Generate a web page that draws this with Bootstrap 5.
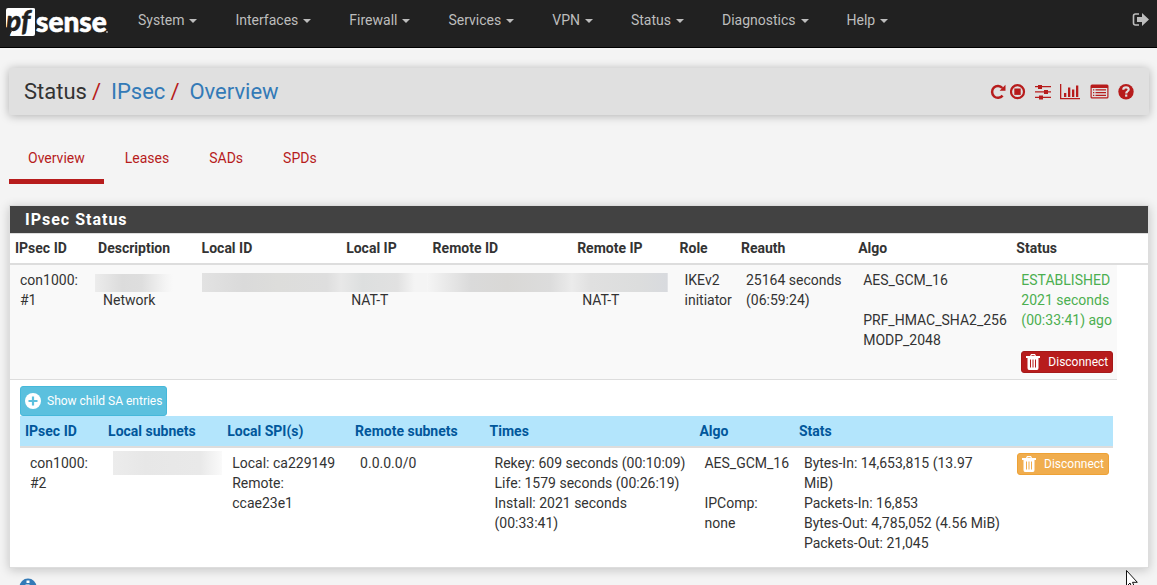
<!DOCTYPE html>
<html lang="en">
<head>
<meta charset="utf-8">
<meta name="viewport" content="width=device-width, initial-scale=1">
<title>Status: IPsec: Overview</title>
<link rel="stylesheet" href="https://cdn.jsdelivr.net/npm/bootstrap@5.3.0/dist/css/bootstrap.min.css">
<style>
  body { background: #f4f4f4; color: #333; font: 14px/20px Roboto, sans-serif; }
  .topbar { background: #212121; border-bottom: 1px solid #000; height: 48px; padding: 0 8px 0 4px; }
  .topbar .nav-link { color: #bdbdbd; font-size: 14px; line-height: 20px; padding: 10px 19px; }
  .topbar .dropdown-toggle::after { border-width: 4px 4px 0; margin-left: 5px; vertical-align: 2px; }
  .main-area { padding: 20px 8px 0 9px; }
  .page-head { background: #e0e0e0; min-height: 47px; padding: 0 15px; border-radius: 2px; box-shadow: 0 1px 10px rgba(0,0,0,.28); }
  .crumbs { font-size: 22px; line-height: 24px; }
  .crumbs a { color: #337ab7; text-decoration: none; }
  .crumbs .breadcrumb-item + .breadcrumb-item { padding-left: 0; }
  .crumbs .breadcrumb-item + .breadcrumb-item::before { content: "/"; color: #b71c1c; padding: 0 10px 0 5px; }
  .head-tools a { color: #b71c1c; }
  .subtabs { margin: 22px 0 21px; gap: 2px; }
  .subtabs .nav-link { color: #b71c1c; padding: 12px 19px; border-bottom: 5px solid transparent; line-height: 18px; }
  .subtabs .nav-link.active { border-color: #b71c1c; }
  .status-panel { background: #fff; border: 1px solid #ddd; box-shadow: 0 2px 10px rgba(0,0,0,.2); padding-bottom: 9px; }
  .panel-title { background: #424242; color: #fff; font-size: 15px; line-height: 27px; font-weight: 700; letter-spacing: 1px; padding-left: 15px; margin: 0; }
  .outer-title { font-size: 16px; }
  .grid-table { width: 100%; table-layout: fixed; border-collapse: separate; border-spacing: 0; }
  .grid-table th { padding: 5px; font-weight: 700; border-bottom: 2px solid #ddd; white-space: nowrap; }
  .outer > thead > tr > th { border-top: 1px solid #ddd; padding: 4px 5px 5px; }
  .grid-table td { padding: 5px 10px; vertical-align: top; }
  .grid-table td.tight { padding-right: 0; }
  .grid-table .ike-row td { background: #f9f9f9; padding-bottom: 6px; }
  .ike-row .btn { margin-top: 21px; }
  .grid-table .child-cell { border-top: 1px solid #ddd; padding: 6px 4px 0 10px; }
  .child-table th { background: #b3e5fc; color: #01579b; }
  .text-up { color: #4caf50; }
  .btn-mini { --bs-btn-font-size: 12px; --bs-btn-padding-x: 4px; --bs-btn-padding-y: 1px; --bs-btn-border-radius: 3px; --bs-btn-color: #fff; line-height: 18px; display: inline-flex; align-items: center; white-space: nowrap; }
  .btn-drop { --bs-btn-bg: #b71c1c; --bs-btn-border-color: #a51919; }
  .btn-soft { --bs-btn-bg: #f0ad4e; --bs-btn-border-color: #eea236; }
  .btn-child { --bs-btn-bg: #5bc0de; --bs-btn-border-color: #46b8da; --bs-btn-padding-y: 5px; }
  .redacted { display: block; height: 22px; margin: 0 -10px -2px -5px; background-repeat: no-repeat; background-position: bottom; background-size: 100% 19px; }
  .rd-desc { margin-left: -8px; width: 78px; background-size: 100% 18px; background-image: linear-gradient(90deg, #ececec, #dcdcdc 35%, #dedede 60%, #f4f4f4 90%, #f9f9f9); }
  .rd-a { background-image: linear-gradient(90deg, #e2e2e2, #dadada 30%, #dddddb 55%, #dedede 90%, #e8e8e8); }
  .rd-b { margin-left: -10px; background-image: linear-gradient(90deg, #e8e8e8, #dddfdf 25%, #e1e1e1 65%, #f4f4f4 85%, #f4f4f4); }
  .rd-c { margin-left: -10px; background-image: linear-gradient(90deg, #f4f4f4, #dadada 30%, #d9d8d6 55%, #dcdcdc 85%, #ebebeb); }
  .rd-d { margin-left: -10px; margin-right: -3px; background-image: linear-gradient(90deg, #ebebeb, #e0e0e0 20%, #dcdddd 70%, #d8dade); }
  .rd-net { height: 24px; margin: -2px -10px 0 0; background-size: 100% 24px; background-image: linear-gradient(90deg, #ececec, #e7e7e7 30%, #e9e9e9 80%, #fafafa); }
  .foot-row { padding: 10px 10px 0; height: 27px; }
  .pointer { position: fixed; right: 18px; bottom: -6px; }
</style>
</head>
<body class="overflow-hidden">
<nav class="topbar d-flex align-items-start" aria-label="Main">
  <a class="d-block" href="#" aria-label="pfSense">
    <svg class="d-block" width="115" height="44" viewBox="0 0 115 44">
      <path fill="#fff" d="M4 8H29Q31 8 31 9V34Q31 36 29 36H5L8 31 2 27V10Q2 8 4 8Z"/>
      <text x="2" y="31" font-family="Lato, sans-serif" font-weight="900" font-style="italic" font-size="28" fill="#212121" stroke="#212121" stroke-width=".4">pf</text>
      <text x="32" y="32" font-family="Lato, sans-serif" font-weight="900" font-size="28" fill="#fff" stroke="#fff" stroke-width=".6">sense</text>
      <circle cx="103" cy="32" r="1" fill="#aaa"/>
    </svg>
  </a>
  <ul class="nav flex-nowrap flex-grow-1">
    <li class="nav-item"><a class="nav-link dropdown-toggle" href="#">System</a></li>
    <li class="nav-item"><a class="nav-link dropdown-toggle" href="#">Interfaces</a></li>
    <li class="nav-item"><a class="nav-link dropdown-toggle" href="#">Firewall</a></li>
    <li class="nav-item"><a class="nav-link dropdown-toggle" href="#">Services</a></li>
    <li class="nav-item"><a class="nav-link dropdown-toggle" href="#">VPN</a></li>
    <li class="nav-item"><a class="nav-link dropdown-toggle" href="#">Status</a></li>
    <li class="nav-item"><a class="nav-link dropdown-toggle" href="#">Diagnostics</a></li>
    <li class="nav-item"><a class="nav-link dropdown-toggle" href="#">Help</a></li>
  </ul>
  <a class="d-block pt-2" href="#" aria-label="Logout">
    <svg class="d-block mt-1" width="17" height="16" viewBox="0 0 17 16"><path d="M7 2H3.500Q1.500 2 1.500 4V11Q1.500 13 3.500 13H7" fill="none" stroke="#bdbdbd" stroke-width="1.600"/><path d="M5 5H10V1L17 7.500 10 14V10H5Z" fill="#bdbdbd"/></svg>
  </a>
</nav>

<main class="main-area">
  <header class="page-head d-flex align-items-center justify-content-between">
    <ol class="breadcrumb crumbs mb-0">
      <li class="breadcrumb-item">Status</li>
      <li class="breadcrumb-item"><a href="#">IPsec</a></li>
      <li class="breadcrumb-item"><a href="#">Overview</a></li>
    </ol>
    <div class="head-tools d-flex align-items-center">
      <a class="d-flex me-1" href="#" aria-label="Restart service"><svg width="16" height="16" viewBox="0 0 16 16"><path d="M12.600 11.600A5.900 5.900 0 1 1 12.400 4" fill="none" stroke="currentColor" stroke-width="2.500"/><path d="M15.500 .8V6.700H9.600Z" fill="currentColor"/></svg></a>
      <a class="d-flex me-2" href="#" aria-label="Stop service"><svg width="16" height="16" viewBox="0 0 16 16"><circle cx="7.500" cy="7.700" r="6.500" fill="none" stroke="currentColor" stroke-width="2.200"/><path d="M4.300 4.500H10.700V10.900H4.300Z" fill="currentColor"/></svg></a>
      <a class="d-flex me-2" href="#" aria-label="Settings"><svg width="18" height="16" viewBox="0 0 18 16"><path fill="currentColor" d="M1 2H4V1H8V2H17V3.300H8V5H4V3.300H1ZM1 7.300H10V6H14V7.300H17V8.600H14V10H10V8.600H1ZM1 12.700H5V11.500H9V12.700H17V14H9V15.500H5V14H1Z"/></svg></a>
      <a class="d-flex me-2" href="#" aria-label="Status monitoring"><svg width="22" height="16" viewBox="0 0 22 16"><path fill="currentColor" d="M0 0H1.300V14H20V15.300H0ZM4 9H6.300V13H4ZM8 3.500H10.300V13H8ZM12 5.500H14.300V13H12ZM16 1.500H18.300V13H16Z"/></svg></a>
      <a class="d-flex me-2" href="#" aria-label="Log entries"><svg width="20" height="16" viewBox="0 0 20 16"><path fill="currentColor" fill-rule="evenodd" d="M2 .5H17Q18.500 .5 18.500 2V13Q18.500 14.500 17 14.500H2Q.5 14.500 .5 13V2Q.5 .5 2 .5ZM1.700 4V13.300H17.300V4ZM3 5.300H4.300V6.500H3ZM5.500 5.300H16V6.500H5.500ZM3 8H4.300V9.200H3ZM5.500 8H16V9.200H5.500ZM3 10.700H4.300V11.900H3ZM5.500 10.700H16V11.900H5.500Z"/></svg></a>
      <a class="d-flex" href="#" aria-label="Help"><svg width="16" height="16" viewBox="0 0 16 16"><circle cx="8" cy="7.700" r="7.700" fill="currentColor"/><path d="M5.300 5.700Q5.300 3.300 8 3.300T10.700 5.600Q10.700 6.700 9.400 7.400 8.200 8 8.200 9.400" fill="none" stroke="#e0e0e0" stroke-width="2.200"/><path d="M7.100 10.500H9.300V12.700H7.100Z" fill="#e0e0e0"/></svg></a>
    </div>
  </header>

  <ul class="nav subtabs">
    <li><a class="nav-link active" href="#">Overview</a></li>
    <li><a class="nav-link" href="#">Leases</a></li>
    <li><a class="nav-link" href="#">SADs</a></li>
    <li><a class="nav-link" href="#">SPDs</a></li>
  </ul>

  <section class="status-panel">
    <h2 class="panel-title outer-title">IPsec Status</h2>
    <table class="grid-table outer">
      <colgroup>
        <col style="width:7.3%"><col style="width:9.1%"><col style="width:12.7%"><col style="width:7.6%"><col style="width:12.7%"><col style="width:9%"><col style="width:5.4%"><col style="width:10.3%"><col style="width:13.9%"><col style="width:9.3%"><col style="width:2.7%">
      </colgroup>
      <thead>
        <tr><th>IPsec ID</th><th>Description</th><th>Local ID</th><th>Local IP</th><th>Remote ID</th><th>Remote IP</th><th>Role</th><th>Reauth</th><th>Algo</th><th>Status</th><th></th></tr>
      </thead>
      <tbody>
        <tr class="ike-row">
          <td>con1000:<br>#1</td>
          <td><span class="redacted rd-desc"></span>Network</td>
          <td><span class="redacted rd-a"></span></td>
          <td><span class="redacted rd-b"></span>NAT-T</td>
          <td><span class="redacted rd-c"></span></td>
          <td><span class="redacted rd-d"></span>NAT-T</td>
          <td class="tight">IKEv2<br>initiator</td>
          <td>25164 seconds (06:59:24)</td>
          <td class="tight">AES_GCM_16<br><br>PRF_HMAC_SHA2_256<br>MODP_2048</td>
          <td class="tight"><div class="text-up">ESTABLISHED<br>2021 seconds<br>(00:33:41) ago</div>
            <button type="button" class="btn btn-mini btn-drop"><svg class="me-2" width="14" height="16" viewBox="0 0 14 16"><path fill="#fff" fill-rule="evenodd" d="M4 2 5 0H9L10 2H14V4H12.500V14Q12.500 16 11 16H3Q1.500 16 1.500 14V4H0V2ZM5.300 2H8.700L8.300 1.200H5.700ZM4 5.500V13.500H5V5.500ZM6.500 5.500V13.500H7.500V5.500ZM9 5.500V13.500H10V5.500Z"/></svg>Disconnect</button></td>
        </tr>
        <tr>
          <td colspan="10" class="child-cell">
            <button type="button" class="btn btn-mini btn-child d-flex"><svg class="me-1" width="18" height="18" viewBox="0 0 18 18"><circle cx="8" cy="9" r="8" fill="#fff"/><path d="M8 4.500V13.500M3.500 9H12.500" stroke="#5bc0de" stroke-width="2.200"/></svg>Show child SA entries</button>
            <table class="grid-table child-table">
              <colgroup>
                <col style="width:7.6%"><col style="width:10.9%"><col style="width:11.7%"><col style="width:12.3%"><col style="width:19.2%"><col style="width:9.1%"><col style="width:19.5%"><col style="width:9.7%">
              </colgroup>
              <thead>
                <tr><th>IPsec ID</th><th>Local subnets</th><th>Local SPI(s)</th><th>Remote subnets</th><th>Times</th><th>Algo</th><th>Stats</th><th></th></tr>
              </thead>
              <tbody>
                <tr>
                  <td>con1000:<br>#2</td>
                  <td><span class="redacted rd-net"></span></td>
                  <td>Local: ca229149<br>Remote:<br>ccae23e1</td>
                  <td>0.0.0.0/0</td>
                  <td class="tight">Rekey: 609 seconds (00:10:09)<br>Life: 1579 seconds (00:26:19)<br>Install: 2021 seconds<br>(00:33:41)</td>
                  <td class="tight">AES_GCM_16<br><br>IPComp:<br>none</td>
                  <td class="tight">Bytes-In: 14,653,815 (13.97<br>MiB)<br>Packets-In: 16,853<br>Bytes-Out: 4,785,052 (4.56 MiB)<br>Packets-Out: 21,045</td>
                  <td class="tight"><button type="button" class="btn btn-mini btn-soft"><svg class="me-2" width="14" height="16" viewBox="0 0 14 16"><path fill="#fff" fill-rule="evenodd" d="M4 2 5 0H9L10 2H14V4H12.500V14Q12.500 16 11 16H3Q1.500 16 1.500 14V4H0V2ZM5.300 2H8.700L8.300 1.200H5.700ZM4 5.500V13.500H5V5.500ZM6.500 5.500V13.500H7.500V5.500ZM9 5.500V13.500H10V5.500Z"/></svg>Disconnect</button></td>
                </tr>
              </tbody>
            </table>
          </td>
        </tr>
      </tbody>
    </table>
  </section>

  <div class="foot-row">
    <svg class="d-block" width="18" height="18" viewBox="0 0 18 18"><circle cx="9" cy="9" r="8.500" fill="#337ab7"/><path fill="#fff" d="M7.500 2.500H10.500V5H7.500ZM6.500 6.500H10.500V12H12V14H6.500V12H7.500V8.500H6.500Z"/></svg>
  </div>
</main>
<svg class="pointer" width="13" height="21" viewBox="0 0 13 21"><path d="M.5 .5V16.500L4 13 6.500 19 9 18 6.500 12.300H11.300Z" fill="#fff" stroke="#111"/></svg>
<script src="https://cdn.jsdelivr.net/npm/bootstrap@5.3.0/dist/js/bootstrap.bundle.min.js"></script>
</body>
</html>
